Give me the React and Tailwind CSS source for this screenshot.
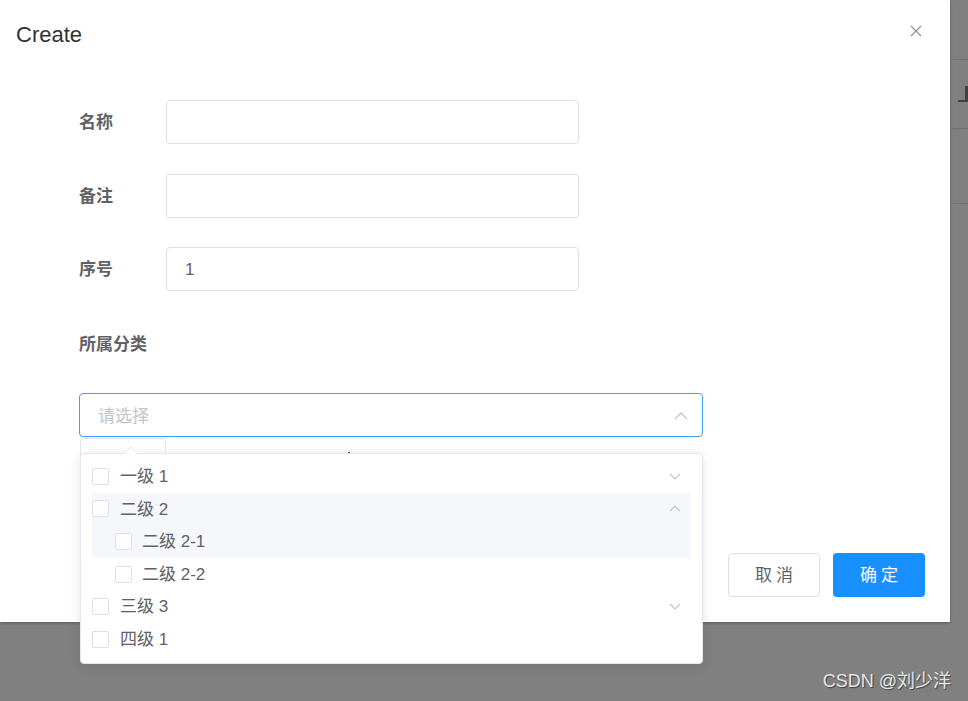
import React from 'react';

const FONT = { fontFamily: '"Liberation Sans", "Noto Sans CJK SC", sans-serif' };

const TREE = [
  { id: 1, label: '一级 1', level: 0, arrow: 'down' },
  { id: 2, label: '二级 2', level: 0, arrow: 'up', active: true },
  { id: 3, label: '二级 2-1', level: 1, active: true },
  { id: 4, label: '二级 2-2', level: 1 },
  { id: 5, label: '三级 3', level: 0, arrow: 'down' },
  { id: 6, label: '四级 1', level: 0 },
];

function Chevron({ dir = 'down', className = '' }) {
  return (
    <svg className={className} width="12" height="7" viewBox="0 0 12 7" fill="none">
      <path
        d={dir === 'down' ? 'M1 1 L6 6 L11 1' : 'M1 6 L6 1 L11 6'}
        stroke="#c0c4cc"
        strokeWidth="1.2"
      />
    </svg>
  );
}

function Field({ label, value }) {
  return (
    <div className="flex items-center h-11">
      <div className="w-[87px] pt-[2px] text-[17px] font-bold text-[#606266]">{label}</div>
      <div className="w-[413px] h-11 border border-[#dcdfe6] rounded-[4px] flex items-center pl-[18px] pt-[2px] text-[17px] text-[#606266]">
        {value}
      </div>
    </div>
  );
}

function TreeDropdown() {
  return (
    <>
      {/* leftover popper tab + arrow */}
      <div className="absolute top-[44px] left-0 w-[86px] h-[20px] border border-b-0 border-[#e4e7ed] rounded-t-[4px] bg-white" />
      <div className="absolute top-[58px] left-[268px] w-[2px] h-[1px] bg-[#555]" />
      <div className="absolute top-[59px] left-0 w-[623px] h-[211px] bg-white border border-[#e4e7ed] rounded-[4px] shadow-[0_2px_12px_0_rgba(0,0,0,0.1)] pt-[6px] pl-[11px] pr-[12px] z-10">
        <svg className="absolute -top-[8px] left-[43px]" width="14" height="8" viewBox="0 0 14 8">
          <path d="M0 8 L7 1 L14 8 Z" fill="#fff" />
          <path d="M0 8 L7 1 L14 8" stroke="#e4e7ed" fill="none" />
        </svg>
        {TREE.map((n) => (
          <div
            key={n.id}
            className={`h-[32.6px] flex items-center ${n.active ? 'bg-[#f5f7fa]' : ''} ${n.level ? 'pl-[23px]' : ''}`}
          >
            <span className="w-[17px] h-[17px] border border-[#dcdfe6] rounded-[2px] bg-white shrink-0" />
            <span className={`${n.level ? 'ml-[10px]' : 'ml-[11px]'} pt-[1px] text-[17px] text-[#606266] flex-1`}>{n.label}</span>
            {n.arrow && <Chevron dir={n.arrow} className="mr-[9px]" />}
          </div>
        ))}
      </div>
    </>
  );
}

export default function App() {
  return (
    <div className="w-[968px] h-[701px] bg-[#808080] relative overflow-hidden flex" style={FONT}>
      {/* dialog */}
      <div className="w-[950px] h-[622px] bg-white flex flex-col shadow-[0_1px_3px_rgba(0,0,0,0.3)] shrink-0">
        <div className="h-[62px] flex justify-between pt-[23px] pl-4 pr-[28px]">
          <div className="text-[22px] leading-6 text-[#303133]">Create</div>
          <svg className="mt-[2px]" width="12" height="12" viewBox="0 0 12 12">
            <path d="M1 1 L11 11 M11 1 L1 11" stroke="#909399" strokeWidth="1.3" />
          </svg>
        </div>

        <div className="pt-[38px] pl-[79px]">
          <Field label="名称" />
          <div className="mt-[30px]">
            <Field label="备注" />
          </div>
          <div className="mt-[29px]">
            <Field label="序号" value="1" />
          </div>
          <div className="mt-[42px] h-6 leading-6 text-[17px] font-bold text-[#606266]">所属分类</div>
          <div className="mt-[36px] relative w-[624px] h-11 border border-[#409eff] rounded-[4px] flex items-center justify-between pl-[18px] pr-[14px]">
            <span className="pt-[3px] text-[17px] text-[#c0c4cc]">请选择</span>
            <svg className="mt-[2px]" width="14" height="8" viewBox="0 0 14 8" fill="none">
              <path d="M1 7 L7 1 L13 7" stroke="#c0c4cc" strokeWidth="1.3" />
            </svg>
            <TreeDropdown />
          </div>
        </div>

        <div className="mt-[116px] flex justify-end gap-[13px] pr-[25px]">
          <button className="w-[92px] h-11 pt-[2px] border border-[#dcdfe6] rounded-[4px] bg-white text-[17px] text-[#606266] tracking-[4px] pl-[4px]">
            取消
          </button>
          <button className="w-[92px] h-11 pt-[2px] rounded-[4px] bg-[#1890ff] text-[17px] text-white tracking-[4px] pl-[4px]">
            确定
          </button>
        </div>
      </div>

      {/* page behind the overlay */}
      <div className="flex-1 flex flex-col">
        <div className="h-[60px] border-b border-[#707070]" />
        <div className="h-[69px] border-b border-[#707070] relative">
          <div className="absolute top-[26px] right-0 w-[3px] h-[16px] bg-[#404040]" />
          <div className="absolute top-[40px] right-0 w-[10px] h-[2px] bg-[#404040]" />
        </div>
        <div className="h-[75px] border-b border-[#707070]" />
      </div>

      <div className="absolute right-[17px] bottom-[6px] text-[18px] text-[#e6e6e6] [text-shadow:1px_1px_1px_rgba(0,0,0,0.5)]">
        CSDN @刘少洋
      </div>
    </div>
  );
}
